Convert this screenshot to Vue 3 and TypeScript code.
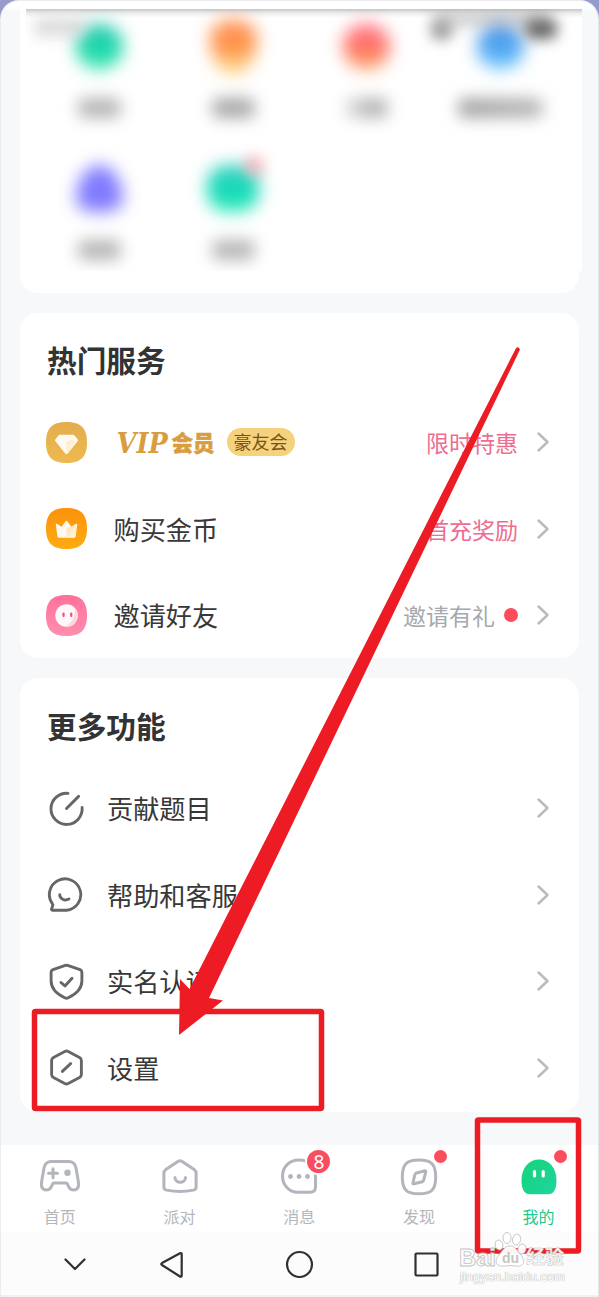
<script setup lang="ts">
interface Shortcut { shape: string; label: string; badge?: boolean }
interface Row { icon: string; text: string; note?: string; tone?: string; dot?: boolean }

const shortcuts: Shortcut[] = [
  { shape: 'mint', label: 'mid' },
  { shape: 'bulb', label: 'mid dark' },
  { shape: 'coral', label: 'fade' },
  { shape: 'sky', label: 'wide' },
  { shape: 'violet', label: 'mid' },
  { shape: 'teal', label: 'mid', badge: true },
]
const services: Row[] = [
  { icon: 'vip', text: 'VIP', note: '限时特惠', tone: 'pink' },
  { icon: 'coin', text: '购买金币', note: '首充奖励', tone: 'pink' },
  { icon: 'friend', text: '邀请好友', note: '邀请有礼', tone: 'grey', dot: true },
]
const features: Row[] = [
  { icon: 'topic', text: '贡献题目' },
  { icon: 'help', text: '帮助和客服' },
  { icon: 'shield', text: '实名认证' },
  { icon: 'settings', text: '设置' },
]
const tabs = ['首页', '派对', '消息', '发现', '我的']
</script>

<template>
  <div class="backdrop">
    <div class="screen">
      <section class="shortcuts">
        <div class="haze">
          <div class="status"><i class="time"></i><i class="signal"></i><i class="band"></i><i class="battery"></i></div>
          <div class="grid">
            <div v-for="(s, i) in shortcuts" :key="i" class="cell">
              <i class="blob" :class="s.shape"></i>
              <i v-if="s.badge" class="badge-soft"></i>
              <i class="caption" :class="s.label"></i>
            </div>
          </div>
        </div>
      </section>

      <section class="card services">
        <h2>热门服务</h2>
        <div v-for="r in services" :key="r.icon" class="row">
          <svg class="app-icon" width="41" height="41" viewBox="0 0 40 40">
            <defs>
              <linearGradient id="gold" x1="0" y1="0" x2="0" y2="1"><stop offset="0" stop-color="#e3ad4e" /><stop offset="1" stop-color="#efb94f" /></linearGradient>
              <linearGradient id="orange" x1="0" y1="0" x2="0" y2="1"><stop offset="0" stop-color="#fb920b" /><stop offset="1" stop-color="#ffab12" /></linearGradient>
              <linearGradient id="rose" x1="0" y1="0" x2="0" y2="1"><stop offset="0" stop-color="#ff709b" /><stop offset="1" stop-color="#ff8fae" /></linearGradient>
              <linearGradient id="shade" x1="0" y1="0" x2="1" y2="1"><stop offset="0" stop-color="#ffe3b0" /><stop offset="1" stop-color="#fff6e6" /></linearGradient>
            </defs>
            <path d="M20 0C34 0 40 6 40 20S34 40 20 40 0 34 0 20 6 0 20 0Z" :fill="r.icon === 'vip' ? 'url(#gold)' : r.icon === 'coin' ? 'url(#orange)' : 'url(#rose)'" />
            <g v-if="r.icon === 'vip'">
              <path d="M13.500 12.500h13c.6 0 1 .2 1.400.6l3 4c.4.7.4 1.200-.1 1.800L21.200 30.800c-.6.7-1.800.7-2.400 0L9.200 18.900c-.5-.6-.5-1.100-.1-1.800l3-4c.4-.4.800-.6 1.400-.6Z" fill="#fffaf0" />
              <path d="M20 19.500l5-2.500 4 1.500-8 12-1 .8Z" fill="url(#shade)" opacity=".7" />
            </g>
            <g v-else-if="r.icon === 'coin'">
              <path d="M9.500 16.200c0-.8.9-1.100 1.500-.6l4.300 2.700L19.200 13c.5-.7 1.100-.7 1.600 0l3.900 5.300 4.300-2.700c.7-.5 1.600-.1 1.500.7l-1.600 11c-.1 1-.7 1.700-1.800 1.700H12.900c-1.100 0-1.700-.7-1.800-1.700Z" fill="#fff9ef" />
              <path d="M20 19.500l9.800-2.800-1.300 10.800c-.1.900-.6 1.400-1.600 1.400H20Z" fill="url(#shade)" />
            </g>
            <g v-else>
              <circle cx="20" cy="20" r="11" fill="#fff7f9" />
              <path d="M28 12.500A11 11 0 0 1 18 30.800C25 28.500 29 21.500 28 12.500Z" fill="#ffd7e2" />
              <rect x="16" y="17" width="2.200" height="4.500" rx="1.100" fill="#ed5585" /><rect x="23.500" y="17" width="2.200" height="4.500" rx="1.100" fill="#ed5585" />
            </g>
          </svg>
          <div v-if="r.icon === 'vip'" class="vip"><em>VIP</em><b>会员</b><span>豪友会</span></div>
          <span v-else class="name">{{ r.text }}</span>
          <span class="note" :class="r.tone">{{ r.note }}</span>
          <i v-if="r.dot" class="dot"></i>
          <svg class="chevron" width="14" height="22" viewBox="0 0 14 22"><path d="M2.500 2.500 11.500 11 2.500 19.500" /></svg>
        </div>
      </section>

      <section class="card features">
        <h2>更多功能</h2>
        <div v-for="r in features" :key="r.icon" class="row">
          <svg class="line-icon" width="39" height="39" viewBox="0 0 38 38">
            <g v-if="r.icon === 'topic'"><path d="M20.500 4.200A15.200 15.200 0 1 0 34.200 18M19 19 30.800 7.200" /></g>
            <g v-else-if="r.icon === 'help'"><path d="M19 34.300H5.300c-.9 0-1.200-.8-.7-1.500l1-3.300c.2-.5.1-.8-.2-1.200A15.300 15.300 0 1 1 19 34.300Z" /><path d="M12.400 19.300c.2 3.600 4.500 6.500 9 4.100" /></g>
            <g v-else-if="r.icon === 'shield'"><path d="M17.900 3.300 5.800 7.500C4.600 8 4 8.600 4 9.900v8.600c0 7 5.800 12.800 13.300 16.400 1.200.6 2.200.6 3.400 0C28.200 31.300 34 25.500 34 18.500V9.900c0-1.300-.6-1.900-1.800-2.400L20.100 3.300a3.500 3.500 0 0 0-2.200 0Z" /><path d="m13.600 20 3.900 3.300 6.900-7.400" /></g>
            <g v-else><path d="m17.300 3.400-11 5.900c-1.200.7-1.800 1.500-1.800 2.900v13.600c0 1.400.6 2.200 1.800 2.900l11 5.900c1.200.6 2.200.6 3.400 0l11-5.900c1.200-.7 1.800-1.500 1.800-2.900V12.200c0-1.400-.6-2.200-1.800-2.900l-11-5.900a3.500 3.500 0 0 0-3.400 0Z" /><path d="m15 22.800 8-7.600" /></g>
          </svg>
          <span class="name">{{ r.text }}</span>
          <svg class="chevron" width="14" height="22" viewBox="0 0 14 22"><path d="M2.500 2.500 11.500 11 2.500 19.500" /></svg>
        </div>
      </section>

      <nav class="tabs">
        <div v-for="(t, i) in tabs" :key="t" class="tab" :class="{ active: i === 4 }">
          <svg width="46" height="42" viewBox="0 0 46 42">
            <g v-if="i === 0"><path d="M14.500 7.500h17c4.500 0 6.700 2 7.500 6.500l2.300 13.200c1.100 6.600-1.200 8.800-4.800 8.800-3.500 0-4.500-2.200-5.800-5.500-.4-1.100-.9-1.500-2-1.500H17.300c-1.100 0-1.600.4-2 1.500C14 33.800 13 36 9.500 36c-3.600 0-5.900-2.200-4.800-8.800L7 14c.8-4.500 3-6.500 7.500-6.500Z" /><path d="M11.500 19.200h9M16 14.700v9" /><circle cx="30.500" cy="18.800" r="3.200" class="solid" /></g>
            <g v-else-if="i === 1"><path d="m20.900 7.400-12.100 8.200c-1.400 1-1.900 1.800-1.900 3.300v14c0 1.800.9 2.800 2.700 3.200 9 1.700 18 1.700 26.800 0 1.800-.4 2.700-1.400 2.700-3.200v-14c0-1.500-.5-2.300-1.900-3.300L25.100 7.400c-1.600-1-2.600-1-4.200 0Z" /><path d="M18 23.500c0 6.300 10.500 6.300 10.500 0" /></g>
            <g v-else-if="i === 2"><path d="M23 6c9.500 0 16.500 6 16.500 15.500V33c0 4-2 5.300-5.500 5.300H22C13 38.300 6.500 31 6.500 22S13.500 6 23 6Z" /><circle cx="14.500" cy="22.500" r="2.400" class="solid" /><circle cx="23" cy="22.500" r="2.400" class="solid" /><circle cx="31.500" cy="22.500" r="2.400" class="solid" /></g>
            <g v-else-if="i === 3"><path d="M23 6c12.500 0 16.700 4.200 16.700 17S35.500 39.800 23 39.800 6.300 35.800 6.300 23 10.500 6 23 6Z" /><path d="m19.800 19.300 9-2.500c.7-.2 1.200.3 1 1l-2.200 8.500c-.2.800-.6 1.200-1.400 1.400l-8.300 2.100c-.8.200-1.200-.3-1-1l2-8.300c.1-.7.300-1 .9-1.200Z" /></g>
            <g v-else><defs><linearGradient id="green" x1="0" y1="0" x2="1" y2="1"><stop offset="0" stop-color="#14d577" /><stop offset="1" stop-color="#20d3a0" /></linearGradient></defs><path class="ghost" d="M23 5.500c10 0 17.500 8 17.500 21 0 9.500-3.300 13.800-8.500 13.800H14c-5.200 0-8.500-4.300-8.500-13.800 0-13 7.500-21 17.500-21Z" /><path class="eyes" d="M18.500 17.500v4.500M27.200 17.500v4.500" /></g>
          </svg>
          <span>{{ t }}</span>
          <i v-if="i === 2" class="count">8</i>
          <i v-if="i > 2" class="tab-dot"></i>
        </div>
      </nav>
      <footer class="system">
        <svg width="599" height="65" viewBox="0 0 599 65"><path d="m65.500 27.500 9.500 9.500 9.500-9.500M180 21.200 162 31c-1 .8-1 1.300 0 2l18 11.500c1.200.6 1.700.2 1.700-1V22.300c0-1.200-.5-1.600-1.700-1.100Z" /><circle cx="299.500" cy="32.500" r="12.500" /><rect x="415.500" y="21.500" width="22" height="22" rx="1" /></svg>
      </footer>
    </div>

    <svg class="marks" width="599" height="1297" viewBox="0 0 599 1297">
      <rect x="34.500" y="1011.500" width="287" height="97" rx="1" />
      <rect x="477.500" y="1120" width="101" height="131" rx="1" />
      <path d="M515.800 348.500Q518 345.500 520 349.500L209 998 223 1000.500 179 1035 180 979 189.500 989Z" />
    </svg>
    <div class="watermark">
      <svg width="110" height="37" viewBox="0 0 110 37">
        <g class="paw"><ellipse cx="47" cy="6" rx="4" ry="5.500" /><ellipse cx="56.500" cy="7.500" rx="4" ry="5.500" transform="rotate(12 56 8)" /><ellipse cx="39" cy="13" rx="3.800" ry="5" transform="rotate(-15 39 13)" /><ellipse cx="62" cy="17" rx="4" ry="5" transform="rotate(15 62 17)" /><path d="M50 14c5 0 7 4 10 8 7 8 3 13-4 12q-6-1-12 0c-7 1-11-4-5-11 4-5 6-9 11-9Z" /></g>
        <text x="-1" y="33.500" class="mark" textLength="37">Bai</text><text x="42" y="31" class="du">du</text><text x="66" y="32" class="mark cn">经验</text>
      </svg>
      <span>jingyan.baidu.com</span>
    </div>
  </div>
</template>

<style>
body { margin: 0; }
</style>
<style scoped>
.backdrop { position: relative; width: 599px; height: 1297px; overflow: hidden; background: #969bce; font-family: "Noto Sans CJK SC", sans-serif; }
.screen { width: 599px; height: 1297px; box-sizing: border-box; background: linear-gradient(#fff 7px, #f6f8fa 10px); border-radius: 19px 19px 0 0; overflow: hidden; display: flex; flex-direction: column; border-left: 1px solid #e9edf2; border-right: 1px solid #e4e8ef; border-top: 1px solid #ececf0; }
.shortcuts { height: 292px; flex: none; margin: 0 19px; padding: 8px 0 0 6px; box-sizing: border-box; background: #fff; border-radius: 0 0 18px 18px; }
.haze { position: relative; width: 556px; height: 262px; overflow: hidden; background: linear-gradient(#c6c6c6 0, #ededed 4px, #fff 9px); }
.grid { display: grid; grid-template-columns: repeat(4, 133.5px); grid-template-rows: 142px 142px; margin-left: 7px; }
.cell { position: relative; display: flex; flex-direction: column; align-items: center; padding-top: 15px; }
.blob { width: 47px; height: 47px; margin: -1px 0; border-radius: 50%; filter: blur(8.500px); }
.mint { background: linear-gradient(#43c9b8, #10d6a8 50%, #55ebb5); }
.bulb { height: 56px; margin-top: -5px; margin-bottom: -6px; border-radius: 48% 48% 50% 50% / 34% 34% 66% 66%; background: linear-gradient(#ff9861, #ff8f45 50%, #ffd586 85%); }
.coral { background: linear-gradient(#ff7c94, #ff6e60 50%, #ffb070); }
.sky { background: linear-gradient(#4f92e3, #50a8f5 60%, #7fd4ff); }
.violet { border-radius: 50% 50% 42% 42% / 75% 75% 25% 25%; background: #807aff; }
.teal { width: 52px; border-radius: 20px; background: linear-gradient(#34cfc0, #12dcb8 60%, #38edbd); }
.caption { width: 43px; height: 20px; margin-top: 29px; border-radius: 7px; background: #b6b6b6; filter: blur(8px); }
.dark { background: #a9a9a9; }
.fade { background: linear-gradient(90deg, #e2e2e2, #b4b4b4 60%); }
.wide { width: 85px; background: linear-gradient(90deg, #a4a4a4, #b9b9b9); }
.badge-soft { position: absolute; right: 35px; top: 4px; width: 22px; height: 22px; border-radius: 50%; background: #ff9ca6; opacity: .6; filter: blur(6.500px); }
.status i { position: absolute; filter: blur(7px); z-index: 2; }
.time { left: 9px; top: 8px; width: 50px; height: 20px; background: #cfcfcfb0; }
.signal { left: 405px; top: 11px; width: 21px; height: 20px; border-radius: 8px; background: #999; }
.band { left: 408px; top: 3px; width: 115px; height: 14px; background: #99999980; }
.battery { left: 499px; top: 10px; width: 32px; height: 20px; border-radius: 8px; background: #666; }
.card { width: 559px; margin-left: 19px; flex: none; box-sizing: border-box; background: #fff; border-radius: 18px; padding: 26px 28px 0 27px; }
.services { height: 345px; margin-top: 20px; }
.features { height: 434px; margin-top: 20px; }
h2 { margin: -1px 0 18px; height: 43px; line-height: 43px; font-size: 29.700px; color: #333; font-weight: 700; }
.row { height: 86.500px; display: flex; align-items: center; }
.app-icon { margin: 0 26.500px 0 -1px; flex: none; }
.line-icon { margin: 0 21px 0 0; flex: none; fill: none; stroke: #666; stroke-width: 2.800; stroke-linecap: round; stroke-linejoin: round; }
.name { font-size: 26.200px; line-height: 40px; color: #383838; }
.features h2 { margin-top: 0; }
.note { margin-left: auto; font-size: 23px; line-height: 36px; }
.pink { color: #ec6e91; }
.grey { color: #a6a8ae; }
.dot { width: 14px; height: 14px; border-radius: 50%; background: #ff4c5c; margin-left: 9px; }
.chevron { margin-left: 18px; margin-right: 1px; flex: none; fill: none; stroke: #b9bbc0; stroke-width: 2.500; stroke-linecap: round; stroke-linejoin: round; }
.features .chevron { margin-left: auto; }
.vip { display: flex; align-items: center; color: #d99d40; margin-left: 3px; }
.vip em { width: 55px; margin-top: 2px; font: italic 700 28.500px/38px "DejaVu Serif Condensed", "DejaVu Serif", serif; }
.vip b { font-weight: 900; font-size: 21.500px; line-height: 34px; -webkit-text-stroke: .5px #d99d40; }
.vip span { margin-left: 12px; width: 68px; height: 28px; border-radius: 14px; background: #f6d17e; color: #785313; text-align: center; font-size: 18px; line-height: 27px; }
.tabs { margin-top: 33px; height: 87px; background: #fff; display: grid; grid-template-columns: repeat(5, 119.700px); margin-left: -1px; flex: none; }
.tab { position: relative; display: flex; flex-direction: column; align-items: center; padding-top: 9px; color: #b4b6bc; font-size: 16px; line-height: 24px; }
.tab svg { flex: none; fill: none; stroke: #b3b5bd; stroke-width: 3; stroke-linecap: round; stroke-linejoin: round; }
.tab > span { margin-top: 8px; }
.tab .solid { fill: #b3b5bd; stroke: none; }
.tab.active { color: #20c98b; }
.tab .ghost { fill: url(#green); stroke: none; }
.tab .eyes { stroke: #fff; stroke-width: 3.200; }
.count { position: absolute; left: 68px; top: 5px; width: 23px; height: 23px; border-radius: 50%; box-shadow: 0 0 0 2px #fff; background: #fb4d60; color: #fff; text-align: center; font: 19px/24px "Noto Sans", sans-serif; }
.tab-dot { position: absolute; left: 75px; top: 5px; width: 13px; height: 13px; border-radius: 50%; background: #fb4d60; }
.system { height: 65px; background: #fcfcfc; flex: none; border-bottom: 2px solid #f0f0f0; box-sizing: border-box; }
.system svg { display: block; margin-left: -1px; fill: none; stroke: #303030; stroke-width: 2.200; stroke-linecap: round; stroke-linejoin: round; }
.marks { position: absolute; left: 0; top: 0; }
.marks rect { fill: none; stroke: #eb1c24; stroke-width: 5.500; stroke-linejoin: round; }
.marks path { fill: #ed1c24; }
.watermark { position: absolute; left: 460px; top: 1232px; width: 110px; }
.watermark svg { display: block; overflow: visible; }
.paw, .mark { fill: #fffffff2; stroke: #c4c4c4; stroke-width: .9; }
.mark { font: 700 24px "Liberation Sans", sans-serif; }
.mark.cn { font: 700 19px "Noto Sans CJK SC", sans-serif; stroke-width: .5; }
.du { font: 700 14px "Liberation Sans", sans-serif; fill: #c4c4c4; }
.watermark span { display: block; padding-top: 1px; font: 13px/13px "Liberation Sans", sans-serif; color: #fff; text-shadow: 0 0 1px #aaa, 0 0 1px #b5b5b5; white-space: nowrap; }
</style>
